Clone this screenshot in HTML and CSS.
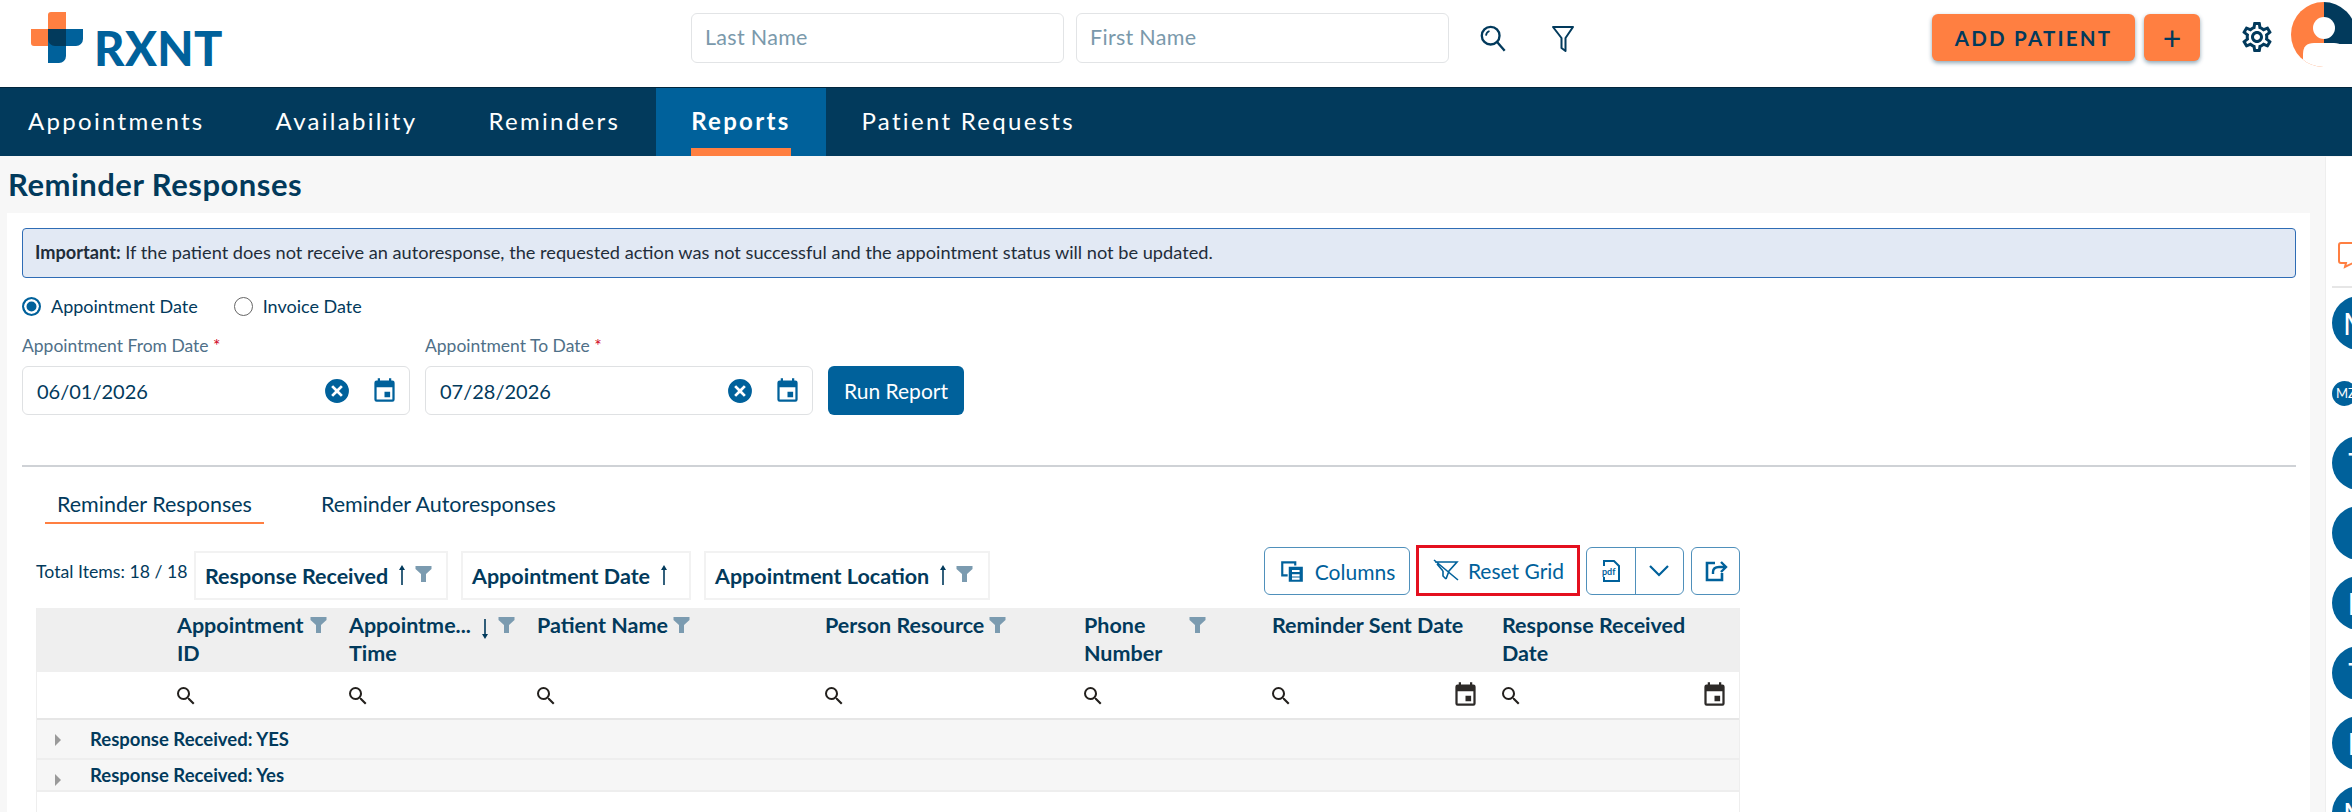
FILE: index.html
```html
<!DOCTYPE html>
<html lang="en">
<head>
<meta charset="utf-8">
<title>Reminder Responses</title>
<link rel="stylesheet" href="styles.css">
</head>
<body>
<svg class="sprite" width="0" height="0" aria-hidden="true">
  <symbol id="i-mag" viewBox="0 0 24 24"><path d="M9.5 3A6.5 6.5 0 0 1 16 9.5c0 1.61-.59 3.09-1.56 4.23l.27.27h.79l5 5-1.5 1.5-5-5v-.79l-.27-.27A6.516 6.516 0 0 1 9.5 16 6.5 6.5 0 0 1 3 9.5 6.5 6.5 0 0 1 9.5 3m0 2C7 5 5 7 5 9.5S7 14 9.5 14 14 12 14 9.5 12 5 9.5 5z"/></symbol>
  <symbol id="i-cal" viewBox="0 0 24 24"><path d="M5 3h1V1h2v2h8V1h2v2h1a2 2 0 0 1 2 2v15a2 2 0 0 1-2 2H5a2 2 0 0 1-2-2V5a2 2 0 0 1 2-2zm0 6v11h14V9H5zm7 4h5v5h-5v-5z" fill-rule="evenodd"/></symbol>
  <symbol id="i-funnel" viewBox="0 0 16 18"><path d="M0 1h16v3l-5.500 5v8h-5V9L0 4z"/></symbol>
  <symbol id="i-clear" viewBox="0 0 24 24"><path d="M12 1a11 11 0 1 1 0 22 11 11 0 0 1 0-22zM8.400 6.600 6.600 8.400l3.600 3.600-3.600 3.600 1.800 1.800 3.600-3.600 3.600 3.600 1.800-1.800-3.600-3.600 3.600-3.600-1.800-1.800-3.600 3.600z" fill-rule="evenodd"/></symbol>
  <symbol id="i-up" viewBox="0 0 10 22"><path d="M5 1 2 6h2.200v15h1.600V6H8z"/></symbol>
  <symbol id="i-down" viewBox="0 0 10 22"><path d="M5 21 2 16h2.200V1h1.600v15H8z"/></symbol>
</svg>

<header class="topbar">
  <div class="logo">
    <svg class="logo-mark" viewBox="0 0 52 51" width="52" height="51">
      <path fill="#ff7f41" d="M17 3a3 3 0 0 1 3-3h15v34H3a3 3 0 0 1-3-3V17h17z"/>
      <path fill="#00619b" d="M17 17h35v10a7 7 0 0 1-7 7H35v10a7 7 0 0 1-7 7H17z"/>
      <path fill="#023a5c" d="M17 17h18v17H24a7 7 0 0 1-7-7z"/>
    </svg>
    <span class="logo-text">RXNT</span>
  </div>
  <div class="top-search">
    <div class="top-input">Last Name</div>
    <div class="top-input">First Name</div>
    <svg class="top-mag" viewBox="0 0 24 24" width="28" height="28"><circle cx="10" cy="10" r="7.600" fill="none" stroke="#023a5c" stroke-width="2"/><path d="M15.500 15.500 22 23" stroke="#023a5c" stroke-width="2" fill="none"/><path d="M6 10a4.500 4.500 0 0 1 3-4" stroke="#023a5c" stroke-width="1.500" fill="none"/></svg>
    <svg class="top-funnel" viewBox="0 0 24 28" width="24" height="28"><path d="M2 2h20l-7.500 11v13l-4-3V13z" fill="none" stroke="#023a5c" stroke-width="2" stroke-linejoin="round"/></svg>
  </div>
  <div class="top-actions">
    <button class="btn-add">ADD PATIENT</button>
    <button class="btn-plus">+</button>
    <svg class="gear" viewBox="0 0 24 24" width="36" height="36"><path fill="#023a5c" d="M19.430 12.980c.04-.32.07-.64.07-.98 0-.34-.03-.66-.07-.98l2.110-1.650c.19-.15.24-.42.12-.64l-2-3.460c-.09-.16-.26-.25-.44-.25-.06 0-.12.01-.17.03l-2.490 1c-.52-.4-1.080-.73-1.690-.98l-.38-2.650C14.460 2.180 14.250 2 14 2h-4c-.25 0-.46.18-.49.42l-.38 2.650c-.61.25-1.170.59-1.690.98l-2.490-1c-.06-.02-.12-.03-.18-.03-.17 0-.34.09-.43.25l-2 3.460c-.13.22-.07.49.12.64l2.110 1.650c-.04.32-.07.65-.07.98 0 .33.03.66.07.98l-2.110 1.650c-.19.15-.24.42-.12.64l2 3.460c.09.16.26.25.44.25.06 0 .12-.01.17-.03l2.490-1c.52.4 1.080.73 1.690.98l.38 2.650c.03.24.24.42.49.42h4c.25 0 .46-.18.49-.42l.38-2.650c.61-.25 1.170-.59 1.690-.98l2.490 1c.06.02.12.03.18.03.17 0 .34-.09.43-.25l2-3.460c.12-.22.07-.49-.12-.64l-2.110-1.650zm-1.980-1.710c.04.31.05.52.05.73 0 .21-.02.43-.05.73l-.14 1.130.89.7 1.080.84-.7 1.210-1.270-.51-1.040-.42-.9.68c-.43.32-.84.56-1.250.73l-1.060.43-.16 1.130-.2 1.350h-1.400l-.19-1.350-.16-1.130-1.060-.43c-.43-.18-.83-.41-1.230-.71l-.91-.7-1.060.43-1.270.51-.7-1.210 1.080-.84.89-.7-.14-1.130c-.03-.31-.05-.54-.05-.74s.02-.43.05-.73l.14-1.130-.89-.7-1.080-.84.7-1.210 1.270.51 1.040.42.9-.68c.43-.32.84-.56 1.250-.73l1.060-.43.16-1.130.2-1.350h1.390l.19 1.350.16 1.130 1.060.43c.43.18.83.41 1.230.71l.91.7 1.060-.43 1.270-.51.7 1.210-1.070.85-.89.7.14 1.130zM12 8c-2.210 0-4 1.790-4 4s1.790 4 4 4 4-1.790 4-4-1.790-4-4-4zm0 6c-1.100 0-2-.9-2-2s.9-2 2-2 2 .9 2 2-.9 2-2 2z"/></svg>
    <svg class="avatar" viewBox="0 0 65 65" width="65" height="65"><clipPath id="av"><circle cx="32.500" cy="32.500" r="32.500"/></clipPath><g clip-path="url(#av)"><rect width="33" height="65" fill="#ff7f41"/><rect x="33" width="32" height="42" fill="#023a5c"/><ellipse cx="33" cy="26" rx="11" ry="11" fill="#fff"/><path d="M12 65V52q0-11 11-11h20q11 0 11 11v13z" fill="#fff"/></g></svg>
  </div>
</header>

<nav class="navbar">
  <a class="nav-item">Appointments</a>
  <a class="nav-item">Availability</a>
  <a class="nav-item">Reminders</a>
  <a class="nav-item is-active">Reports</a>
  <a class="nav-item">Patient Requests</a>
</nav>

<div class="workspace">
  <main class="content">
    <h1 class="page-title">Reminder Responses</h1>
    <section class="panel">
      <div class="alert"><strong>Important:</strong> If the patient does not receive an autoresponse, the requested action was not successful and the appointment status will not be updated.</div>
      <div class="radios">
        <label class="radio"><span class="radio-dot is-on"></span>Appointment Date</label>
        <label class="radio"><span class="radio-dot"></span>Invoice Date</label>
      </div>
      <div class="date-row">
        <div class="date-field">
          <div class="date-label">Appointment From Date <em>*</em></div>
          <div class="date-box"><span class="date-value">06/01/2026</span><svg class="ic-blue ic-clear"><use href="#i-clear"/></svg><svg class="ic-blue ic-date"><use href="#i-cal"/></svg></div>
        </div>
        <div class="date-field">
          <div class="date-label">Appointment To Date <em>*</em></div>
          <div class="date-box"><span class="date-value">07/28/2026</span><svg class="ic-blue ic-clear"><use href="#i-clear"/></svg><svg class="ic-blue ic-date"><use href="#i-cal"/></svg></div>
        </div>
        <button class="btn-run">Run Report</button>
      </div>
      <hr class="rule">
      <div class="tabs">
        <div class="tab is-active">Reminder Responses</div>
        <div class="tab">Reminder Autoresponses</div>
      </div>
      <div class="grid-wrap">
        <div class="toolbar">
          <span class="total">Total Items: 18 / 18</span>
          <div class="chip chip-a">Response Received<svg class="sort"><use href="#i-up"/></svg><svg class="funnel"><use href="#i-funnel"/></svg></div>
          <div class="chip chip-b">Appointment Date<svg class="sort"><use href="#i-up"/></svg></div>
          <div class="chip chip-c">Appointment Location<svg class="sort"><use href="#i-up"/></svg><svg class="funnel"><use href="#i-funnel"/></svg></div>
          <div class="tools">
            <button class="tool tool-cols">
              <svg viewBox="0 0 24 24" width="26" height="26"><path fill="#00619b" d="M2 3h14v4h-2V5H4v10h4v2H2zM9 8h13v14H9zm3 3v2h7v-2zm0 4v2h7v-2zm0 3v2h7v-2z" fill-rule="evenodd"/></svg>
              Columns
            </button>
            <button class="tool tool-reset">
              <svg viewBox="0 0 28 24" width="28" height="24"><path d="M3 3h22l-8 9-3 8M11 12 5 5M2 1l24 20" fill="none" stroke="#00619b" stroke-width="1.600"/><path d="M11 12v5l3 3" fill="none" stroke="#00619b" stroke-width="1.600"/></svg>
              Reset Grid
            </button>
            <div class="tool-split">
              <button class="tool-part">
                <svg viewBox="0 0 20 24" width="20" height="24"><path d="M3 7V2h10l5 5v15H3v-4" fill="none" stroke="#00619b" stroke-width="2"/><text x="1" y="16" class="pdf-text">pdf</text></svg>
              </button>
              <button class="tool-part">
                <svg viewBox="0 0 24 24" width="24" height="24"><path d="M3 7l9 9 9-9" fill="none" stroke="#00619b" stroke-width="2.200"/></svg>
              </button>
            </div>
            <button class="tool tool-export">
              <svg viewBox="0 0 24 24" width="24" height="24"><path d="M11 4H3v17h15v-7" fill="none" stroke="#00619b" stroke-width="2.600"/><path d="M9 15v-2q0-5 6-5h6M17 3l5 5-5 5" fill="none" stroke="#00619b" stroke-width="2.400"/></svg>
            </button>
          </div>
        </div>
        <div class="table">
          <div class="t-head">
            <div class="th"></div>
            <div class="th"><span class="th-text">Appointment ID</span><svg class="funnel"><use href="#i-funnel"/></svg></div>
            <div class="th"><span class="th-text">Appointme... Time</span><svg class="sort"><use href="#i-down"/></svg><svg class="funnel"><use href="#i-funnel"/></svg></div>
            <div class="th"><span class="th-text th-auto">Patient Name</span><svg class="funnel"><use href="#i-funnel"/></svg></div>
            <div class="th"><span class="th-text th-auto">Person Resource</span><svg class="funnel"><use href="#i-funnel"/></svg></div>
            <div class="th"><span class="th-text th-narrow">Phone Number</span><svg class="funnel funnel-end"><use href="#i-funnel"/></svg></div>
            <div class="th"><span class="th-text">Reminder Sent Date</span></div>
            <div class="th"><span class="th-text">Response Received Date</span></div>
          </div>
          <div class="t-filter">
            <div class="tf"></div>
            <div class="tf"><svg class="mag"><use href="#i-mag"/></svg></div>
            <div class="tf"><svg class="mag"><use href="#i-mag"/></svg></div>
            <div class="tf"><svg class="mag"><use href="#i-mag"/></svg></div>
            <div class="tf"><svg class="mag"><use href="#i-mag"/></svg></div>
            <div class="tf"><svg class="mag"><use href="#i-mag"/></svg></div>
            <div class="tf"><svg class="mag"><use href="#i-mag"/></svg><svg class="cal"><use href="#i-cal"/></svg></div>
            <div class="tf"><svg class="mag"><use href="#i-mag"/></svg><svg class="cal"><use href="#i-cal"/></svg></div>
          </div>
          <div class="t-group t-group-a"><span class="caret"></span>Response Received: YES</div>
          <div class="t-group t-group-b"><span class="caret"></span>Response Received: Yes</div>
          <div class="t-rest"></div>
        </div>
      </div>
    </section>
  </main>
  <aside class="side">
    <div class="side-top">
      <svg viewBox="0 0 32 28" width="32" height="28"><path d="M4 2h24a2 2 0 0 1 2 2v16a2 2 0 0 1-2 2H16l-8 4 1-4H4a2 2 0 0 1-2-2V4a2 2 0 0 1 2-2z" fill="none" stroke="#ff7f41" stroke-width="2"/></svg>
    </div>
    <div class="side-row"><div class="bubble">M</div></div>
    <div class="side-row"><div class="bubble bubble-sm">MZ</div></div>
    <div class="side-row"><div class="bubble">T</div></div>
    <div class="side-row"><div class="bubble">I</div></div>
    <div class="side-row"><div class="bubble">R</div></div>
    <div class="side-row"><div class="bubble">T</div></div>
    <div class="side-row"><div class="bubble">R</div></div>
    <div class="side-row"><div class="bubble">M</div></div>
  </aside>
</div>
</body>
</html>
```

FILE: styles.css
```css
* { box-sizing: border-box; }
html, body { margin: 0; padding: 0; height: 812px; overflow: hidden; }
body { font-family: "Lato", "Noto Sans", sans-serif; color: #023a5c; background: #f7f7f7; width: 2352px; }
button { font-family: inherit; cursor: pointer; }
.sprite { position: absolute; }

.topbar { height: 87px; background: #fff; display: flex; align-items: flex-start; }
.logo { width: 691px; padding: 12px 0 0 31px; display: flex; align-items: flex-start; gap: 11px; flex: none; }
.logo-mark { flex: none; }
.logo-text { font-size: 47px; font-weight: 900; color: #00619b; line-height: 51px; padding-top: 11px; letter-spacing: .4px; }
.top-search { display: flex; align-items: center; gap: 12px; padding-top: 13px; width: 1241px; flex: none; }
.top-input { width: 373px; height: 50px; border: 1px solid #e2e4e6; border-radius: 6px; padding: 0 13px; line-height: 46px; font-size: 21.500px; letter-spacing: .3px; color: #7a99ab; background: #fff; }
.top-mag { margin-left: 18px; }
.top-funnel { margin-left: 32px; margin-top: 2px; }
.top-actions { display: flex; align-items: flex-start; flex: none; padding-top: 14px; }
.btn-add, .btn-plus { height: 47px; background: #ff7f41; border: 0; border-radius: 6px; color: #023a5c; font-weight: 700; box-shadow: 0 2px 4px rgba(2, 58, 92, .45); }
.btn-add { width: 203px; font-size: 20.500px; letter-spacing: 2.200px; }
.btn-plus { width: 56px; margin-left: 9px; font-size: 32px; font-weight: 400; line-height: 40px; padding: 0; }
.gear { margin: 5px 0 0 39px; flex: none; }
.avatar { margin: -12px 0 0 16px; flex: none; }

.navbar { height: 69px; background: #023a5c; display: flex; padding-left: 3px; border-top: 1px solid #01263d; }
.nav-item { padding: 0 25px; line-height: 66px; color: #fff; font-size: 24px; letter-spacing: 2.300px; margin-right: 21px; position: relative; }
.nav-item.is-active { background: #00619b; font-weight: 700; padding: 0 35px; margin: 0 11px 0 -10px; }
.nav-item.is-active::after { content: ""; position: absolute; left: 35px; right: 35px; bottom: 0; height: 8px; background: #ff7f41; }

.workspace { height: 656px; display: flex; }
.content { width: 2310px; flex: none; padding-left: 7px; }
.page-title { margin: 0; height: 57px; font-size: 31px; font-weight: 700; letter-spacing: .5px; line-height: 56px; padding-left: 1px; color: #023a5c; }
.panel { background: #fff; height: 599px; padding: 15px 14px 0 15px; }
.alert { height: 50px; background: #e2e9f4; border: 1px solid #2e6cb5; border-radius: 4px; padding: 0 12px; line-height: 47px; font-size: 18.200px; color: #1f2d3a; }
.alert strong { font-weight: 700; }
.radios { display: flex; gap: 36px; height: 56px; align-items: center; }
.radio { display: flex; align-items: center; gap: 10px; font-size: 18px; color: #023a5c; }
.radio-dot { width: 19px; height: 19px; border: 1.500px solid #666; border-radius: 50%; display: block; }
.radio-dot.is-on { border: 2px solid #00619b; background: #00619b; box-shadow: inset 0 0 0 2.500px #fff; }
.date-row { display: flex; align-items: flex-end; gap: 15px; height: 81px; }
.date-field { width: 388px; display: flex; flex-direction: column; }
.date-label { font-size: 17.500px; color: #4f7088; height: 31px; line-height: 22px; }
.date-label em { color: #d0021b; font-style: normal; }
.date-box { height: 49px; border: 1px solid #dfe1e3; border-radius: 6px; display: flex; align-items: center; padding: 0 11px 0 14px; background: #fff; }
.date-value { font-size: 20px; color: #023a5c; flex: 1; }
.ic-blue { fill: #00619b; flex: none; }
.ic-clear { width: 26px; height: 26px; }
.ic-date { width: 27px; height: 27px; margin-left: 21px; }
.btn-run { width: 136px; height: 49px; background: #00619b; border: 0; border-radius: 6px; color: #fff; font-size: 21px; font-weight: 400; }
.rule { border: 0; border-top: 2px solid #cfd2d6; margin: 50px 0 0; }
.tabs { display: flex; padding-left: 35px; gap: 69px; height: 56px; align-items: flex-start; padding-top: 24px; }
.tab { font-size: 21.500px; color: #023a5c; line-height: 27px; }
.tab.is-active { position: relative; }
.tab.is-active::after { content: ""; position: absolute; left: -12px; right: -12px; top: 31px; height: 2px; background: #ff7f41; }

.grid-wrap { width: 1704px; margin: 22px 0 0 14px; }
.toolbar { display: flex; align-items: flex-start; height: 63px; }
.total { width: 158px; font-size: 17.700px; color: #023a5c; padding-top: 16px; flex: none; }
.chip { height: 49px; margin-top: 6px; border: 2px solid #f2f2f2; font-size: 21.500px; font-weight: 700; color: #023a5c; display: flex; align-items: center; padding-left: 9px; flex: none; background: #fff; margin-right: 13px; white-space: pre; }
.chip-a { width: 254px; }
.chip-b { width: 230px; }
.chip-c { width: 286px; }
.sort { width: 10px; height: 22px; fill: #023a5c; flex: none; margin-left: 9px; margin-top: -2px; }
.funnel { width: 17px; height: 18px; fill: #7b9bb0; flex: none; margin-left: 8px; margin-top: -4px; }
.tools { margin-left: auto; display: flex; align-items: flex-start; padding-top: 2px; }
.tool, .tool-split { height: 48px; border: 1px solid #4f90bb; border-radius: 6px; background: #fff; color: #00619b; font-size: 21px; display: flex; align-items: center; justify-content: center; gap: 10px; padding: 0; }
.tool-cols { width: 146px; }
.tool-reset { width: 164px; margin: -2px 6px 0 6px; height: 51px; border: 3px solid #e4101f; border-radius: 0; gap: 8px; }
.tool-split { width: 98px; overflow: hidden; gap: 0; }
.tool-part { height: 100%; border: 0; background: none; flex: 1; display: flex; align-items: center; justify-content: center; padding: 0; }
.tool-part + .tool-part { border-left: 1px solid #4f90bb; }
.tool-export { width: 49px; margin-left: 7px; }
.pdf-text { font-family: "Lato", sans-serif; font-size: 9px; font-weight: 700; fill: #00619b; }

.table { border-left: 1px solid #eee; border-right: 1px solid #eee; }
.t-head, .t-filter { display: grid; grid-template-columns: 128px 172px 188px 288px 259px 188px 230px 249px; }
.t-head { height: 64px; background: #efefef; }
.th { display: flex; align-items: flex-start; padding: 4px 10px 0 12px; font-size: 21.500px; font-weight: 700; line-height: 27.500px; color: #023a5c; }
.th .funnel { margin-top: 4px; margin-left: 5px; }
.th .sort { margin: 6px 3px 0 0; }
.th-text { flex: 1; min-width: 0; }
.th-auto { flex: none; }
.th-narrow { max-width: 100px; }
.funnel-end { margin-left: auto; }
.t-filter { height: 48px; background: #fff; border-bottom: 2px solid #e6e6e6; }
.tf { display: flex; align-items: center; justify-content: space-between; padding: 2px 11px 0 9px; }
.mag { width: 24px; height: 24px; fill: #23201d; }
.cal { width: 27px; height: 27px; fill: #2d2a28; margin-top: -4px; }
.t-group { background: #f6f6f6; border-bottom: 2px solid #eee; font-size: 18.500px; font-weight: 700; color: #023a5c; position: relative; display: flex; align-items: center; padding-left: 53px; }
.t-group-a { height: 40px; }
.t-group-b { height: 32px; }
.caret { width: 0; height: 0; border-left: 6px solid #9a9a9a; border-top: 6px solid transparent; border-bottom: 6px solid transparent; position: absolute; left: 18px; top: 14px; }
.t-rest { height: 60px; background: #fff; }

.side { flex: 1; margin: 1px 0 0 15px; background: #fff; border-left: 1px solid #eee; overflow: hidden; padding-left: 6px; display: flex; flex-direction: column; }
.side-top { height: 131px; flex: none; border-bottom: 2px solid #e6e6e6; padding: 84px 0 0 5px; }
.side-row { height: 70px; flex: none; display: flex; align-items: center; }
.bubble { width: 54px; height: 54px; border-radius: 50%; background: #00619b; color: #fff; font-size: 30px; flex: none; display: flex; align-items: center; justify-content: center; padding-right: 4px; }
.bubble-sm { width: 25px; height: 25px; font-size: 13px; padding: 0 0 0 4px; justify-content: flex-start; }
```
